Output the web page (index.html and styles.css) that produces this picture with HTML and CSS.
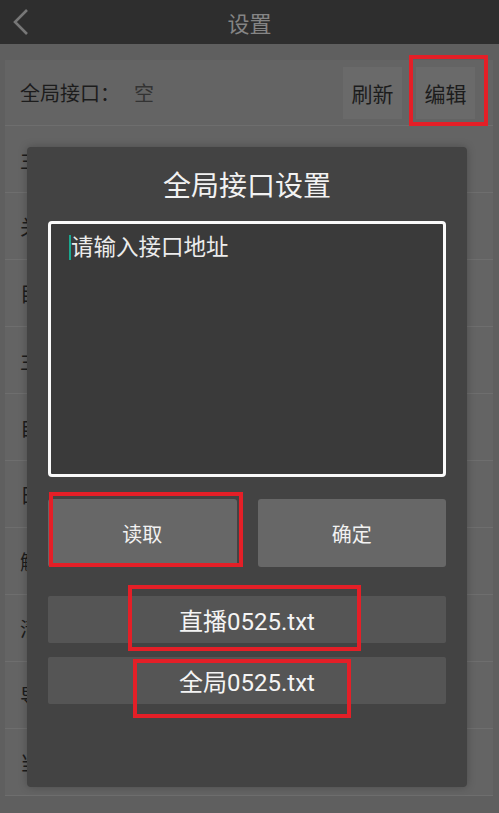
FILE: index.html
```html
<!DOCTYPE html>
<html lang="zh-CN">
<head>
<meta charset="UTF-8">
<meta name="viewport" content="width=device-width, initial-scale=1.0">
<title>设置</title>
<link rel="stylesheet" href="styles.css">
</head>
<body>
<div class="topbar">
    <svg class="back" width="24" height="30" viewBox="0 0 24 30"><path d="M19 3 L7 15 L19 27" fill="none" stroke="#777" stroke-width="2.6"/></svg>
    <span class="title">设置</span>
</div>
<div class="page">
    <div class="settings">
        <div class="row head-row">
            <span class="label">全局接口：</span>
            <span class="value">空</span>
            <span class="spacer"></span>
            <span class="btn">刷新</span>
            <span class="btn">编辑</span>
        </div>
        <div class="row">主页设置</div>
        <div class="row">关于</div>
        <div class="row">目录</div>
        <div class="row">主题</div>
        <div class="row">自动</div>
        <div class="row">日志</div>
        <div class="row">解析</div>
        <div class="row">清理缓存</div>
        <div class="row">导出</div>
        <div class="row">当前</div>
    </div>
</div>

<div class="dialog">
    <h2>全局接口设置</h2>
    <div class="input-box">
        <span class="cursor"></span><span class="placeholder">请输入接口地址</span>
    </div>
    <div class="actions">
        <div class="action">读取</div>
        <div class="action">确定</div>
    </div>
    <div class="file-list">
        <div class="file">直播0525.txt</div>
        <div class="file">全局0525.txt</div>
    </div>
</div>

<div class="mark mark-edit"></div>
<div class="mark mark-read"></div>
<div class="mark mark-live"></div>
<div class="mark mark-global"></div>
</body>
</html>
```

FILE: styles.css
```css
body {
    margin: 0;
    padding: 0;
    background-color: #5f5f5f;
    font-family: "Roboto", "Noto Sans CJK SC", sans-serif;
    width: 499px;
    height: 813px;
    overflow: hidden;
    position: relative;
}
.topbar {
    height: 44px;
    background-color: #2e2e2e;
    display: flex;
    align-items: center;
    justify-content: center;
    position: relative;
}
.topbar .back {
    position: absolute;
    left: 8px;
    top: 7px;
}
.topbar .title {
    color: #858585;
    font-size: 22px;
}
.page {
    padding: 16px 6px 0 5px;
}
.settings {
    background-color: #646464;
}
.row {
    height: 67px;
    border-bottom: 1px solid #6e6e6e;
    box-sizing: border-box;
    display: flex;
    align-items: center;
    padding-left: 15px;
    font-size: 20px;
    color: #1c1c1c;
}
.head-row {
    height: 66px;
    padding-right: 18px;
}
.head-row .value {
    color: #333;
    margin-left: 14px;
}
.spacer {
    flex: 1;
}
.btn {
    height: 52px;
    width: 59px;
    display: flex;
    align-items: center;
    justify-content: center;
    background-color: #6a6a6a;
    color: #1c1c1c;
    font-size: 21px;
    margin-left: 14px;
}
.dialog {
    position: absolute;
    left: 27px;
    top: 147px;
    width: 440px;
    height: 640px;
    background-color: #434343;
    border-radius: 4px;
    box-shadow: 0 0 8px rgba(0, 0, 0, 0.25);
    padding: 0 21px;
    box-sizing: border-box;
}
.dialog h2 {
    margin: 0;
    height: 74px;
    display: flex;
    align-items: center;
    justify-content: center;
    color: #f2f2f2;
    font-size: 28px;
    font-weight: normal;
}
.input-box {
    height: 256px;
    border: 3px solid #fafafa;
    border-radius: 4px;
    background-color: #3a3a3a;
    box-sizing: border-box;
    padding: 8px 0 0 18px;
    display: flex;
    align-items: flex-start;
}
.cursor {
    width: 2px;
    height: 25px;
    background-color: #1aa88f;
    margin-top: 3px;
}
.placeholder {
    color: #ececec;
    font-size: 22.5px;
    line-height: 30px;
}
.actions {
    display: flex;
    gap: 21px;
    margin-top: 22px;
}
.action {
    flex: 1;
    height: 68px;
    background-color: #676767;
    border-radius: 3px;
    display: flex;
    align-items: center;
    justify-content: center;
    color: #f2f2f2;
    font-size: 20px;
}
.file-list {
    margin-top: 29px;
    display: flex;
    flex-direction: column;
    gap: 14px;
}
.file {
    height: 47px;
    background-color: #555;
    border-radius: 2px;
    display: flex;
    align-items: center;
    justify-content: center;
    color: #f4f4f4;
    font-size: 24px;
}
.mark {
    position: absolute;
    border: 4px solid #e41f27;
    box-sizing: border-box;
}
.mark-edit {
    left: 409px;
    top: 55px;
    width: 79px;
    height: 71px;
}
.mark-read {
    left: 49px;
    top: 492px;
    width: 194px;
    height: 75px;
}
.mark-live {
    left: 128px;
    top: 585px;
    width: 233px;
    height: 66px;
}
.mark-global {
    left: 133px;
    top: 659px;
    width: 218px;
    height: 59px;
}
```
